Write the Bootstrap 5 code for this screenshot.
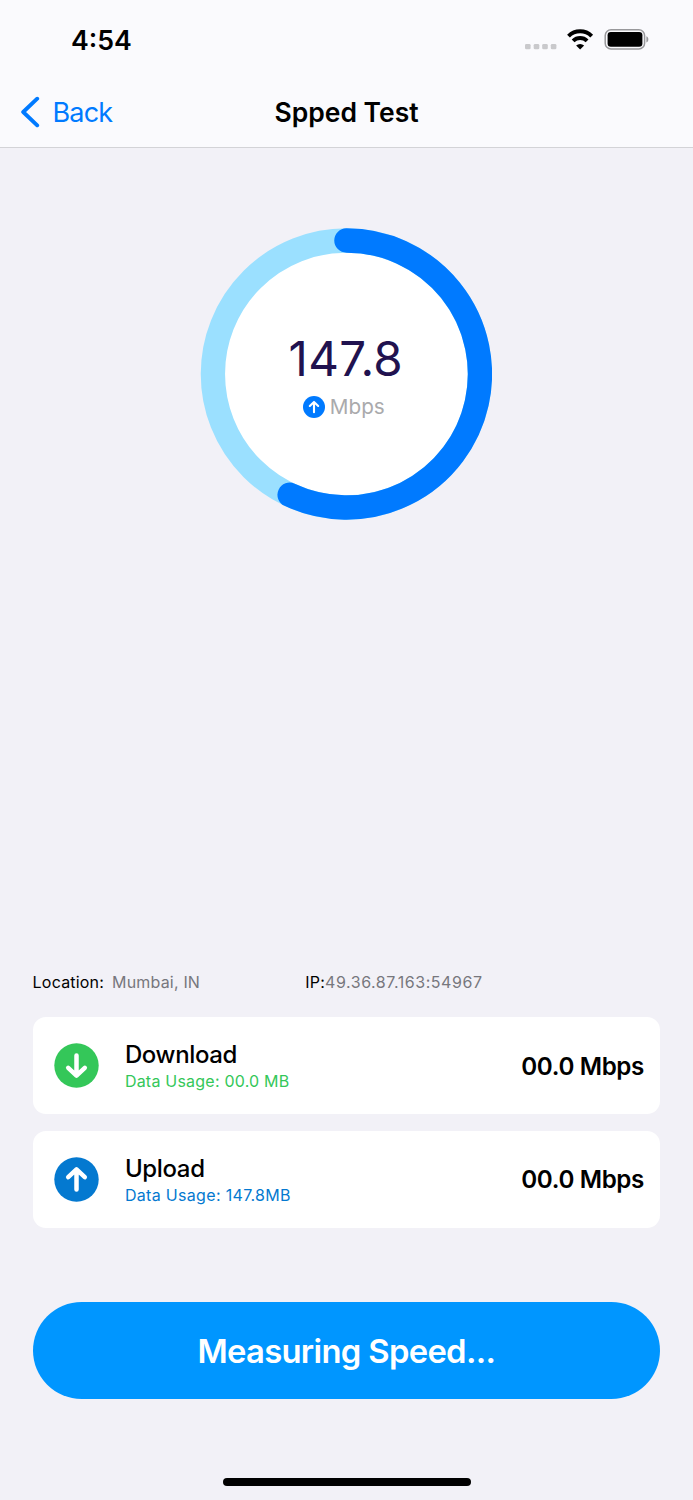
<!DOCTYPE html>
<html lang="en">
<head>
<meta charset="utf-8">
<meta name="viewport" content="width=device-width, initial-scale=1">
<title>Spped Test</title>
<link href="https://cdn.jsdelivr.net/npm/bootstrap@5.3.0/dist/css/bootstrap.min.css" rel="stylesheet">
<style>
  body { font-family: Inter, "Liberation Sans", sans-serif; background: #f2f1f7; color: #000; height: 1500px; overflow: hidden; }
  svg { display: block; flex: none; }
  .app-header { height: 148px; background: #fafafd; border-bottom: 1px solid #d3d3d7; }
  .status-row { height: 78px; padding: 0 44px 0 71px; }
  .clock { font-size: 26.7px; font-weight: 600; line-height: 78px; letter-spacing: 0; padding-top: 1px; }
  .title-row { height: 68px; display: grid; grid-template-columns: 1fr auto 1fr; }
  .back-link { color: #007aff; font-size: 27px; padding-left: 20px; gap: 12.5px; letter-spacing: -.8px; }
  .back-link span { padding-top: 2px; }
  .screen-title { font-size: 26.5px; font-weight: 600; letter-spacing: -.02px; padding-top: 2px; }
  .gauge { width: 292px; height: 292px; margin-top: 80px; margin-left: -1px; }
  .gauge-text { padding-top: 2px; }
  .gauge-value { font-size: 47.5px; line-height: 58px; color: #21124f; letter-spacing: .3px; font-weight: 400; }
  .gauge-unit { font-size: 20.7px; line-height: 26px; color: #aaaaac; gap: 5px; margin: 6px 4px 0 0; }
  .page-body { padding: 0 33px 0 32.6px; }
  .meta-row { margin-top: 450px; height: 24px; font-size: 16px; line-height: 24px; letter-spacing: .2px; }
  .meta-muted { color: #77777d; }
  .meta-ip { letter-spacing: .55px; }
  .location-col { width: 272.7px; }
  .location-col .meta-muted { margin-left: 8px; letter-spacing: .18px; }
  .speed-card { height: 97px; border-radius: 13px; border: 0; padding: 0 16px 0 21px; margin-bottom: 16.3px; }
  .speed-card.first-card { margin-top: 23.4px; }
  .speed-text { margin-left: 26.3px; padding-top: 1.2px; }
  .speed-name { font-size: 24px; font-weight: 500; line-height: 30px; letter-spacing: -.35px; }
  .speed-usage { font-size: 16px; line-height: 22px; letter-spacing: .22px; }
  .speed-usage.text-up { letter-spacing: .32px; }
  .speed-rate { font-size: 24.2px; font-weight: 600; letter-spacing: -.38px; padding-top: 2px; }
  .text-down { color: #34c759; }
  .text-up { color: #0479d0; }
  .btn-measure, .btn-measure:hover { height: 97px; background: #0096ff; color: #fff; font-size: 32.8px; font-weight: 600; letter-spacing: -.68px; margin-top: 58px; border: 0; padding-top: 8px; }
  .home-bar { width: 248px; height: 8px; background: #000; margin: 79.5px 0 0 1px; }
</style>
</head>
<body>
<header class="app-header">
  <div class="status-row d-flex align-items-center justify-content-between">
    <div class="clock">4:54</div>
    <svg width="124" height="24" viewBox="0 -.9 124 24" aria-hidden="true">
      <g fill="#c9c9cc">
        <rect x="0" y="16" width="5.6" height="5.4" rx="1.4"/><rect x="8.7" y="16" width="5.6" height="5.4" rx="1.4"/><rect x="17.2" y="16" width="5.6" height="5.4" rx="1.4"/><rect x="25.8" y="16" width="5.6" height="5.4" rx="1.4"/>
      </g>
      <g fill="none" stroke="#000" stroke-width="4">
        <path d="M43.5 8.2a16.6 16.6 0 0 1 23.2 0"/>
        <path d="M48.1 13a10.1 10.1 0 0 1 14 0"/>
      </g>
      <path d="M55.1 21.7l-4-4a5.8 5.8 0 0 1 8 0z"/>
      <rect x="80.2" y="1.9" width="39.4" height="19.2" rx="5.8" fill="none" stroke="#98989b" stroke-width="1.5"/>
      <rect x="82.6" y="4.1" width="34.8" height="14.8" rx="3.2"/>
      <path d="M121.4 8.4c2.6 1 2.6 5.2 0 6.2z" fill="#98989b"/>
    </svg>
  </div>
  <nav class="title-row align-items-center">
    <a class="back-link d-flex align-items-center text-decoration-none" href="#">
      <svg width="20" height="32" viewBox="0 0 20 32" fill="none" stroke="#007aff" stroke-width="3.9" stroke-linecap="round" stroke-linejoin="round"><path d="M17.2 2.7L3.2 16l14 13.3"/></svg>
      <span>Back</span>
    </a>
    <div class="screen-title">Spped Test</div>
    <span></span>
  </nav>
</header>

<main class="page-body d-flex flex-column">
  <div class="gauge position-relative align-self-center">
    <svg width="292" height="292" viewBox="-146.4 -146 292 292">
      <circle r="133.5" fill="#fff" stroke="#9be0ff" stroke-width="24.3"/>
      <path d="M0-133.5A133.5 133.5 0 1 1-56.8 120.8" fill="none" stroke="#007aff" stroke-width="24.3" stroke-linecap="round"/>
    </svg>
    <div class="gauge-text position-absolute top-0 start-0 w-100 h-100 d-flex flex-column align-items-center justify-content-center">
      <div class="gauge-value">147.8</div>
      <div class="gauge-unit d-flex align-items-center">
        <svg width="22" height="22" viewBox="0 0 22 22"><circle cx="11" cy="11" r="11" fill="#007aff"/><path d="M11 16.2V6M6.8 10L11 5.9 15.2 10" fill="none" stroke="#fff" stroke-width="2.1" stroke-linecap="round" stroke-linejoin="round"/></svg>
        <span>Mbps</span>
      </div>
    </div>
  </div>

  <div class="meta-row d-flex">
    <div class="location-col">Location:<span class="meta-muted">Mumbai, IN</span></div>
    <div>IP:<span class="meta-muted meta-ip">49.36.87.163:54967</span></div>
  </div>

  <div class="card speed-card first-card flex-row align-items-center">
    <svg width="45" height="45" viewBox="0 0 45 45"><circle cx="22.5" cy="22.5" r="22.2" fill="#34c759"/><path d="M22.5 12.6V32.6M14.2 24.8l8.3 7.8 8.3-7.8" fill="none" stroke="#fff" stroke-width="4.5" stroke-linecap="round" stroke-linejoin="round"/></svg>
    <div class="speed-text">
      <div class="speed-name">Download</div>
      <div class="speed-usage text-down">Data Usage: 00.0 MB</div>
    </div>
    <div class="speed-rate ms-auto">00.0 Mbps</div>
  </div>
  <div class="card speed-card flex-row align-items-center">
    <svg width="45" height="45" viewBox="0 0 45 45"><circle cx="22.5" cy="22.5" r="22.2" fill="#0479d0"/><path d="M22.5 32.4V12.4M14.2 20.2l8.3-7.8 8.3 7.8" fill="none" stroke="#fff" stroke-width="4.5" stroke-linecap="round" stroke-linejoin="round"/></svg>
    <div class="speed-text">
      <div class="speed-name">Upload</div>
      <div class="speed-usage text-up">Data Usage: 147.8MB</div>
    </div>
    <div class="speed-rate ms-auto">00.0 Mbps</div>
  </div>

  <button class="btn btn-measure rounded-pill w-100" type="button">Measuring Speed...</button>
  <div class="home-bar rounded-pill align-self-center"></div>
</main>
<script src="https://cdn.jsdelivr.net/npm/bootstrap@5.3.0/dist/js/bootstrap.bundle.min.js"></script>
</body>
</html>
